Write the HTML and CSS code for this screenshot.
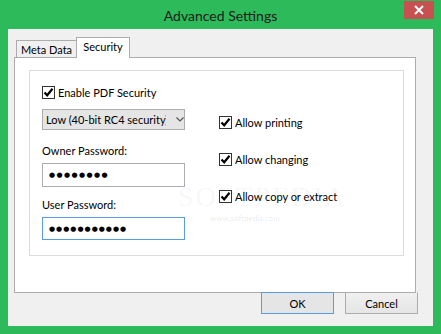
FILE: index.html
```html
<!DOCTYPE html>
<html lang="en">
<head>
    <meta charset="UTF-8">
    <title>Advanced Settings</title>
    <link rel="stylesheet" href="styles.css">
</head>
<body>
    <div class="window">
        <div class="titlebar">
            <span class="title">Advanced Settings</span>
            <div class="close-btn">
                <svg width="10" height="10" viewBox="0 0 10 10"><path d="M1 1 L9 9 M9 1 L1 9" stroke="#fff" stroke-width="2"/></svg>
            </div>
        </div>
        <div class="client">
            <div class="watermark">
                <div class="wm-big">SOFTPEDIA</div>
                <div class="wm-small">www.softpedia.com</div>
            </div>
            <div class="tabs">
                <div class="tab">Meta Data</div>
                <div class="tab active">Security</div>
            </div>
            <div class="panel">
                <div class="group">
                    <div class="col-left">
                        <label class="check-row">
                            <span class="check-box"><svg width="11" height="11" viewBox="0 0 11 11"><path d="M1.5 5.5 L4.2 8.3 L9.5 1.8" fill="none" stroke="#000" stroke-width="2.2"/></svg></span>
                            Enable PDF Security
                        </label>
                        <div class="dropdown">
                            <span class="dropdown-text">Low (40-bit RC4 security)</span>
                            <svg class="dropdown-arrow" width="8" height="5" viewBox="0 0 8 5"><path d="M0.5 0.5 L4 4 L7.5 0.5" fill="none" stroke="#555" stroke-width="1.2"/></svg>
                        </div>
                        <div class="field-label">Owner Password:</div>
                        <div class="text-input"><span class="dots">&#9679;&#9679;&#9679;&#9679;&#9679;&#9679;&#9679;&#9679;</span></div>
                        <div class="field-label">User Password:</div>
                        <div class="text-input focused"><span class="dots tight">&#9679;&#9679;&#9679;&#9679;&#9679;&#9679;&#9679;&#9679;&#9679;&#9679;&#9679;</span></div>
                    </div>
                    <div class="col-right">
                        <label class="check-row">
                            <span class="check-box"><svg width="11" height="11" viewBox="0 0 11 11"><path d="M1.5 5.5 L4.2 8.3 L9.5 1.8" fill="none" stroke="#000" stroke-width="2.2"/></svg></span>
                            Allow printing
                        </label>
                        <label class="check-row">
                            <span class="check-box"><svg width="11" height="11" viewBox="0 0 11 11"><path d="M1.5 5.5 L4.2 8.3 L9.5 1.8" fill="none" stroke="#000" stroke-width="2.2"/></svg></span>
                            Allow changing
                        </label>
                        <label class="check-row">
                            <span class="check-box"><svg width="11" height="11" viewBox="0 0 11 11"><path d="M1.5 5.5 L4.2 8.3 L9.5 1.8" fill="none" stroke="#000" stroke-width="2.2"/></svg></span>
                            Allow copy or extract
                        </label>
                    </div>
                </div>
            </div>
            <div class="buttons">
                <div class="btn default">OK</div>
                <div class="btn">Cancel</div>
            </div>
        </div>
    </div>
</body>
</html>
```

FILE: styles.css
```css
* {
    margin: 0;
    padding: 0;
    box-sizing: border-box;
}

body {
    font-family: Lato, 'Noto Sans', sans-serif;
    font-size: 11px;
    color: #000;
    background-color: #2dba5a;
    width: 441px;
    height: 334px;
    overflow: hidden;
}

.window {
    height: 334px;
    display: flex;
    flex-direction: column;
}

.titlebar {
    position: relative;
    height: 29px;
    display: flex;
    align-items: center;
    justify-content: center;
}

.title {
    font-size: 14px;
    color: #1c1c1c;
    padding-top: 1px;
}

.close-btn {
    position: absolute;
    top: 1px;
    right: 7px;
    width: 30px;
    height: 18px;
    background-color: #c75050;
    display: flex;
    align-items: center;
    justify-content: center;
}

.client {
    position: relative;
    margin: 0 8px;
    height: 297px;
    background-color: #f0f0f0;
    padding-top: 8px;
}

.tabs {
    display: flex;
    align-items: flex-end;
    height: 20px;
    margin-left: 8px;
}

.tab {
    height: 17px;
    padding: 0 4px;
    border: 1px solid #acacac;
    border-bottom: none;
    background-color: #f0f0f0;
    line-height: 17px;
    white-space: nowrap;
    text-align: center;
}

.tab:first-child {
    width: 61px;
    margin-right: -1px;
}

.tab.active {
    position: relative;
    z-index: 1;
    width: 54px;
    height: 21px;
    margin-bottom: -1px;
    background-color: #fff;
    line-height: 17px;
}

.panel {
    position: relative;
    margin-left: 6px;
    width: 402px;
    height: 236px;
    border: 1px solid #acacac;
    background-color: #fff;
    padding: 12px 0 0 14px;
}

.group {
    width: 375px;
    height: 186px;
    border: 1px solid #dcdcdc;
    padding: 14px 0 0 12px;
    display: flex;
}

.col-left {
    width: 143px;
    display: flex;
    flex-direction: column;
}

.col-right {
    margin-left: 34px;
    padding-top: 30px;
    display: flex;
    flex-direction: column;
    gap: 22px;
}

.check-row {
    height: 15px;
    display: flex;
    align-items: center;
    gap: 3px;
    white-space: nowrap;
}

.check-box {
    width: 13px;
    height: 13px;
    border: 1px solid #333;
    background-color: #fff;
    display: flex;
    align-items: center;
    justify-content: center;
}

.dropdown {
    margin-top: 9px;
    height: 21px;
    border: 1px solid #acacac;
    background-color: #e5e5e5;
    display: flex;
    align-items: center;
    padding-left: 3px;
}

.dropdown-text {
    width: 120px;
    overflow: hidden;
    white-space: nowrap;
}

.dropdown-arrow {
    margin-left: 10px;
}

.field-label {
    margin-top: 13px;
    height: 15px;
    line-height: 15px;
}

.field-label + .text-input {
    margin-top: 5px;
}

.text-input + .field-label {
    margin-top: 10px;
}

.text-input {
    height: 24px;
    border: 1px solid #abadb3;
    background-color: #fff;
    display: flex;
    align-items: center;
    padding-left: 6px;
}

.text-input.focused {
    border-color: #569de5;
    height: 23px;
}

.dots {
    font-family: 'DejaVu Sans', sans-serif;
    font-size: 7px;
    letter-spacing: 1.4px;
}

.dots.tight {
    letter-spacing: 1px;
}

.buttons {
    display: flex;
    justify-content: flex-end;
    gap: 11px;
    margin-top: -1px;
    padding-right: 15px;
}

.btn {
    width: 73px;
    height: 22px;
    border: 1px solid #acacac;
    border-top-color: #ececec;
    background: linear-gradient(#f0f0f0, #e5e5e5);
    display: flex;
    align-items: center;
    justify-content: center;
}

.btn.default {
    position: relative;
    z-index: 1;
    border-color: #569de5;
    background: #e5e5e5;
}

.watermark {
    position: absolute;
    left: 170px;
    top: 152px;
    z-index: 2;
    pointer-events: none;
}

.wm-big {
    font-family: 'Liberation Serif', serif;
    font-size: 28px;
    letter-spacing: 2px;
    color: rgba(0, 0, 0, 0.05);
}

.wm-small {
    margin-left: 32px;
    font-size: 8px;
    color: rgba(0, 0, 0, 0.1);
}
```
